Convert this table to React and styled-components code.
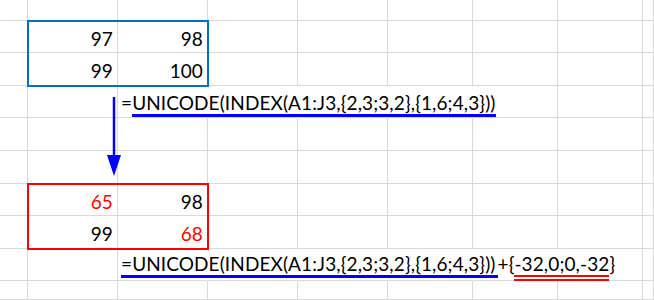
import React from "react";
import styled, { createGlobalStyle } from "styled-components";

const GlobalStyle = createGlobalStyle`
  html, body {
    margin: 0;
    padding: 0;
    background: #fff;
  }
  * {
    box-sizing: border-box;
  }
`;

const Sheet = styled.div`
  display: grid;
  grid-template-columns: 28px 90px 90px 90px 90px 85px 85px 85px 1fr;
  grid-template-rows: 21px 32px 33px 32px 33px 33px 32px 33px 32px 1fr;
  width: 654px;
  height: 300px;
  overflow: hidden;
  font-family: Lato, "Noto Sans", sans-serif;
  font-size: 19px;
  letter-spacing: 0.1px;
  color: #000;
`;

const Cell = styled.div`
  grid-row: ${({ $r }) => $r + 1};
  grid-column: ${({ $c }) => $c + 1};
  display: flex;
  align-items: flex-end;
  justify-content: ${({ $align }) => ($align === "left" ? "flex-start" : "flex-end")};
  padding: 0 4px ${({ $pb }) => $pb}px 3px;
  border-bottom: 1px solid #d9d9d9;
  border-right: 1px solid ${({ $noRight }) => ($noRight ? "transparent" : "#d9d9d9")};
  white-space: nowrap;
  min-width: 0;
  ${({ $spill }) => ($spill ? "position: relative; z-index: 1; overflow: visible;" : "")}
`;

const Num = styled.span`
  color: ${({ $red }) => ($red ? "#ff0000" : "#000")};
`;

const Under = styled.span`
  border-bottom: ${({ $double }) => ($double ? "6px double" : "3px solid")}
    ${({ $color }) => $color};
  padding-right: ${({ $extra }) => $extra || 0}px;
`;

const Frame = styled.div`
  grid-column: ${({ $col }) => $col};
  grid-row: ${({ $row }) => $row};
  margin: -1px;
  border: 2px solid ${({ $color }) => $color};
  z-index: 2;
  pointer-events: none;
`;

const ArrowBox = styled.div`
  grid-column: 2 / 3;
  grid-row: 4 / 7;
  z-index: 2;
  svg {
    display: block;
    overflow: visible;
  }
`;

const F1 = "UNICODE(INDEX(A1:J3,{2,3;3,2},{1,6;4,3}))";

const formula1 = (
  <span>
    =<Under $color="#0000ff">{F1}</Under>
  </span>
);

const formula2 = (
  <span>
    <Under $color="#0000ff" $extra={2}>={F1}</Under>+{"{"}
    <Under $color="#ff0000" $double>-32,0;0,-32</Under>
    {"}"}
  </span>
);

const content = {
  "1-1": { node: <Num>97</Num> },
  "1-2": { node: <Num>98</Num> },
  "2-1": { node: <Num>99</Num> },
  "2-2": { node: <Num>100</Num> },
  "3-2": { node: formula1, spill: true },
  "6-1": { node: <Num $red>65</Num> },
  "6-2": { node: <Num>98</Num> },
  "7-1": { node: <Num>99</Num> },
  "7-2": { node: <Num $red>68</Num> },
  "8-2": { node: formula2, spill: true },
};

const hiddenRight = (r, c) =>
  (r === 3 && c >= 2 && c <= 5) || (r === 8 && c >= 2 && c <= 6);

const padBottom = [2, 2, 3, 3, 3, 3, 2, 3, 5, 2];

export default function App() {
  const cells = [];
  for (let r = 0; r < 10; r++) {
    for (let c = 0; c < 9; c++) {
      const item = content[`${r}-${c}`];
      cells.push(
        <Cell
          key={`${r}-${c}`}
          $r={r}
          $c={c}
          $noRight={hiddenRight(r, c)}
          $spill={item && item.spill}
          $align={item && item.spill ? "left" : "right"}
          $pb={padBottom[r]}
        >
          {item ? item.node : null}
        </Cell>
      );
    }
  }

  return (
    <>
      <GlobalStyle />
      <Sheet>
        {cells}
        <Frame $col="2 / 4" $row="2 / 4" $color="#0070c0" />
        <Frame $col="2 / 4" $row="7 / 9" $color="#ff0000" />
        <ArrowBox>
          <svg width="90" height="98" viewBox="0 0 90 98">
            <line x1="86" y1="11" x2="86" y2="70" stroke="#0000ff" strokeWidth="2.5" />
            <polygon points="79,69 93,69 86,90" fill="#0000ff" />
          </svg>
        </ArrowBox>
      </Sheet>
    </>
  );
}
